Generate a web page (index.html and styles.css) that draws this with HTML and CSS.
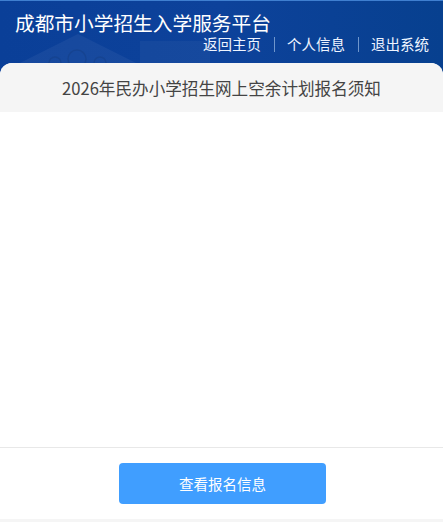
FILE: index.html
```html
<!DOCTYPE html>
<html lang="zh-CN">
<head>
    <meta charset="UTF-8">
    <title>成都市小学招生入学服务平台</title>
    <link rel="stylesheet" href="styles.css">
</head>
<body>
    <div class="header">
        <svg class="header-bg" width="443" height="75" viewBox="0 0 443 75">
            <path d="M18 63 L78 33 L138 63 Z" fill="#fff" opacity="0.05"/>
            <circle cx="55" cy="62" r="6" fill="none" stroke="#000" stroke-width="1.5" opacity="0.08"/>
            <circle cx="77" cy="58" r="9" fill="none" stroke="#000" stroke-width="1.5" opacity="0.08"/>
            <circle cx="100" cy="62" r="6" fill="none" stroke="#000" stroke-width="1.5" opacity="0.08"/>
            <path d="M140 40h70v23h-70z" fill="#fff" opacity="0.04"/>
        </svg>
        <h1 class="site-title">成都市小学招生入学服务平台</h1>
        <div class="nav">
            <a href="#">返回主页</a>
            <span class="nav-sep"></span>
            <a href="#">个人信息</a>
            <span class="nav-sep"></span>
            <a href="#">退出系统</a>
        </div>
    </div>
    <div class="card">
        <div class="card-title">2026年民办小学招生网上空余计划报名须知</div>
        <div class="card-body"></div>
        <div class="card-footer">
            <a href="#" class="btn">查看报名信息</a>
        </div>
    </div>
</body>
</html>
```

FILE: styles.css
```css
html, body {
    margin: 0;
    padding: 0;
}

body {
    height: 522px;
    overflow: hidden;
    background-color: #f5f5f5;
    font-family: "Noto Sans CJK SC", "Liberation Sans", sans-serif;
}

a {
    color: inherit;
    text-decoration: none;
}

.header {
    position: relative;
    height: 75px;
    box-sizing: border-box;
    padding: 10px 14px 0 15px;
    border-top: 1px solid #3f7fd0;
    background: linear-gradient(90deg, #0a3f98 0%, #0d429b 50%, #07408f 100%);
    color: #fff;
}

.header-bg {
    position: absolute;
    top: 0;
    left: 0;
}

.site-title {
    position: relative;
    margin: 0;
    font-size: 19.7px;
    font-weight: 400;
    line-height: 23px;
}

.nav {
    position: relative;
    display: flex;
    justify-content: flex-end;
    align-items: center;
    gap: 12.5px;
    font-size: 14.5px;
    line-height: 20px;
    color: #eef4ff;
}

.nav-sep {
    width: 1px;
    height: 15px;
    background-color: #6f96cc;
}

.card {
    position: relative;
    display: flex;
    flex-direction: column;
    height: 456px;
    margin-top: -12px;
    border-radius: 12px 12px 0 0;
    overflow: hidden;
    background-color: #fff;
}

.card-title {
    height: 49px;
    line-height: 50px;
    text-align: center;
    font-size: 16.6px;
    color: #444;
    background-color: #f5f5f5;
}

.card-body {
    flex: 1;
}

.card-footer {
    display: flex;
    justify-content: center;
    height: 72px;
    padding: 15px 0 0 2px;
    box-sizing: border-box;
    border-top: 1px solid #e8e8e8;
}

.btn {
    width: 207px;
    height: 41px;
    line-height: 41px;
    border-radius: 4px;
    text-align: center;
    font-size: 14.5px;
    color: #fff;
    background-color: #409eff;
}
```
